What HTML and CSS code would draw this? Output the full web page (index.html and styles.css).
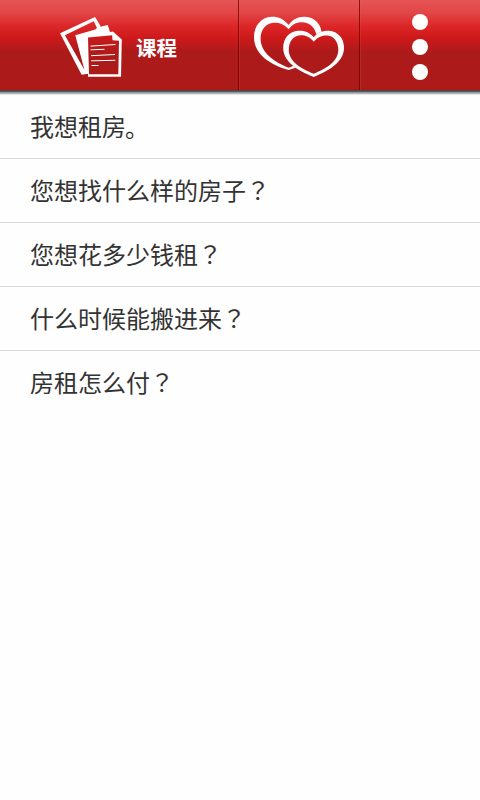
FILE: index.html
```
<!DOCTYPE html>
<html lang="zh-CN">
<head>
<meta charset="utf-8">
<title>课程</title>
<link rel="stylesheet" href="styles.css">
</head>
<body>
<header class="bar">
  <div class="tab tab-course">
    <svg class="icon-docs" width="64" height="62" viewBox="59 16 64 62" fill="#fff">
      <path fill-rule="evenodd" d="M60 33.3 L95 17 L100 25 L112 70 L81.6 74.8 Z M64.9 35.2 L93.7 21.2 L103 40 L100 68 L84.2 69.5 Z"/>
      <path d="M75.3 35.2 L96 29.2 L97 27.5 L107.8 25 L110 32 L113 31.5 L121.8 39.5 L121 76.8 H88 V74 L85.5 74 Z"/>
      <path fill="url(#paper)" d="M88 37.6 L112.2 35.2 L112.5 40.3 L119 40.7 L118.3 74.3 H89 Z"/>
      <path d="M90.5 46.1 L115.5 44.5 M90.5 49.8 L104.5 49.3 M91 55.7 L115 54.5 M91 60.8 L115.3 60.3 M91.5 65.5 H98.5" stroke="#fff" stroke-width="1" fill="none"/>
      <defs><linearGradient id="paper" gradientUnits="userSpaceOnUse" x1="0" y1="34" x2="0" y2="54"><stop offset="0" stop-color="#cf1a1b"/><stop offset="1" stop-color="#ad1a1a"/></linearGradient></defs>
    </svg>
    <span class="label">课程</span>
  </div>
  <div class="tab tab-fav">
    <svg width="92" height="62" viewBox="253 16 92 62" fill="#fff">
      <defs><mask id="behind" maskUnits="userSpaceOnUse" x="250" y="10" width="100" height="70">
        <path fill="#fff" d="M250 10H350V80H250Z"/>
        <path fill="#000" d="M313.7 37.3 C309 31.5 303 30.4 298 30.8 C289 31.5 283.2 38.5 283.2 47.5 C283.2 62 297 70 313.7 77 C330 70 344 62 344 47.5 C344 38.5 338 31.3 329 30.8 C323 30.4 317.5 32.5 313.7 37.3Z"/>
      </mask></defs>
      <path mask="url(#behind)" fill-rule="evenodd" d="M288.7 25 C283.5 18.5 277.5 16.5 271.5 16.8 C261 17.3 254 26 254 37 C254 55 271 65 288.7 70 C306 65 322 56 322 36 C322 25 315 17 305 16.8 C298 16.5 292.5 19.5 288.7 25Z M288.7 29.3 C284 24 279 22.3 273.5 22.7 C265.5 23.2 260.6 30 260.6 38.5 C260.6 53 275 62.5 288.7 67.8 C303 62.5 317.5 53 316.5 35 C315 27 309 22 301.7 22.3 C296 22.3 292 24.8 288.7 29.3Z"/>
      <path fill-rule="evenodd" d="M313.7 37.3 C309 31.5 303 30.4 298 30.8 C289 31.5 283.2 38.5 283.2 47.5 C283.2 62 297 70 313.7 77 C330 70 344 62 344 47.5 C344 38.5 338 31.3 329 30.8 C323 30.4 317.5 32.5 313.7 37.3Z M313.7 41.7 C309.5 36.5 304.5 34.9 300 35.3 C293 35.9 288.8 42 288.8 49.5 C288.8 61.5 300 68 313.7 73.8 C327 68 338.3 61.5 338.3 49.5 C338.3 42 334 36 327.5 35.5 C322 35 317 37.5 313.7 41.7Z"/>
    </svg>
  </div>
  <div class="tab tab-menu">
    <i class="dot"></i><i class="dot"></i><i class="dot"></i>
  </div>
</header>
<ul class="list">
  <li>我想租房<span class="stop">。</span></li>
  <li>您想找什么样的房子<span class="mark" lang="zh-TW">？</span></li>
  <li>您想花多少钱租<span class="mark" lang="zh-TW">？</span></li>
  <li>什么时候能搬进来<span class="mark" lang="zh-TW">？</span></li>
  <li>房租怎么付<span class="mark" lang="zh-TW">？</span></li>
</ul>
</body>
</html>
```
FILE: styles.css
```
* { box-sizing: border-box; }
body {
  margin: 0;
  background: #fefefe;
  color: #333;
  font-family: "Noto Sans CJK SC", sans-serif;
}
.bar {
  display: flex;
  height: 95px;
  padding-bottom: 5px;
  background:
    linear-gradient(#464646 0 1px, #5c5c5c 1px 2px, #939393 2px 3px, #b9b9b9 3px 4px, #e4e4e4 4px 5px) 0 90px / 100% 5px no-repeat,
    linear-gradient(#e65455 0, #e24748 12px, #db2527 27px, #cf1a1b 37px, #ad1a1a 52px, #ad1a1a 90px);
}
.tab { display: flex; height: 90px; }
.tab-course {
  width: 238px;
  padding: 16px 0 0 59px;
}
.label {
  margin: 16px 0 0 13px;
  color: #fff;
  font-size: 20.5px;
  font-weight: 700;
  line-height: 30px;
}
.tab-fav, .tab-menu {
  border-left: 1px solid rgba(110, 0, 0, .75);
  box-shadow: inset 1px 0 rgba(255, 90, 80, .2);
}
.tab-fav {
  width: 121px;
  padding: 16px 0 0 14px;
}
.tab-menu {
  flex: 1;
  flex-direction: column;
  align-items: center;
  gap: 9px;
  padding-top: 14px;
}
.dot {
  width: 16px;
  height: 16px;
  border-radius: 50%;
  background: #fff;
}
.list {
  margin: 0;
  padding: 0;
  list-style: none;
}
.list li {
  height: 64px;
  padding-left: 30px;
  border-bottom: 1px solid #d9d9d9;
  font-size: 24px;
  line-height: 62px;
  white-space: nowrap;
}
.list li:last-child { border-bottom: 0; }
.mark { font-family: "Noto Sans CJK TC", sans-serif; }
.stop { margin-left: -1px; vertical-align: -1px; }
```
